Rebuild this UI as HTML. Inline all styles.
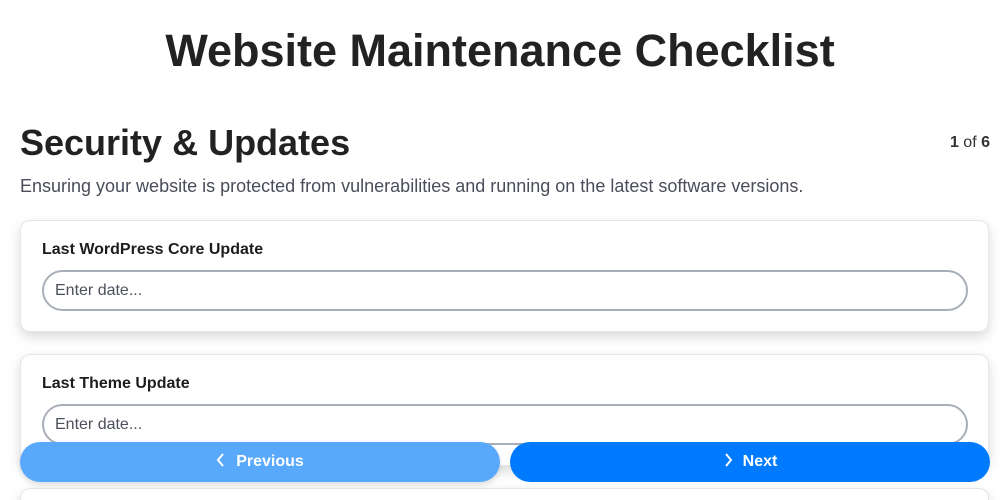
<!DOCTYPE html>
<html><head><style>
*{box-sizing:border-box;margin:0;padding:0}
html,body{width:1000px;height:500px;overflow:hidden}
body{background:#fff;font-family:"Liberation Sans",sans-serif;color:#212529;position:relative}
h1{position:absolute;top:25px;left:0;width:1000px;text-align:center;font-size:45px;font-weight:bold;color:#222}
h2{position:absolute;top:122px;left:20px;font-size:36px;font-weight:bold;color:#222}
.cnt{position:absolute;top:134px;right:10px;font-size:16px;color:#333}
.desc{position:absolute;top:176px;left:20px;font-size:18px;color:#4a4d5a}
.card{position:absolute;left:20px;width:969px;height:112px;background:#fff;border:1px solid #e6e6ea;border-radius:10px;box-shadow:0 5px 12px rgba(0,0,0,.15)}
.card label{position:absolute;left:21px;top:20px;font-size:16px;font-weight:bold;color:#1d1d1d}
.card .in{position:absolute;left:21px;top:49px;width:926px;height:41px;border:2px solid #a9afb8;border-radius:21px;font-size:16px;color:#4b505a;padding:10px 0 0 11px}
.btn{position:absolute;top:442px;height:40px;border-radius:20px;color:#fff;font-weight:bold;font-size:16px;text-align:center;line-height:40px}
</style></head><body>
<h1>Website Maintenance Checklist</h1>
<h2>Security &amp; Updates</h2>
<div class="cnt"><b>1</b> of <b>6</b></div>
<div class="desc">Ensuring your website is protected from vulnerabilities and running on the latest software versions.</div>
<div class="card" style="top:220px"><label>Last WordPress Core Update</label><div class="in">Enter date...</div></div>
<div class="card" style="top:354px"><label>Last Theme Update</label><div class="in">Enter date...</div></div>
<div class="card" style="top:488px"></div>
<div class="btn" style="left:20px;width:480px;background:#58a8fb;box-shadow:0 3px 6px rgba(0,0,0,.12)"><svg width="10" height="14" viewBox="0 0 10 14" style="margin-right:10px;vertical-align:-1px"><path d="M7 1L2 7l5 6" stroke="#fff" stroke-width="2" fill="none"/></svg>Previous</div>
<div class="btn" style="left:510px;width:480px;background:#007bff"><svg width="10" height="14" viewBox="0 0 10 14" style="margin-right:10px;vertical-align:-1px"><path d="M3 1l5 6-5 6" stroke="#fff" stroke-width="2" fill="none"/></svg>Next</div>
</body></html>
